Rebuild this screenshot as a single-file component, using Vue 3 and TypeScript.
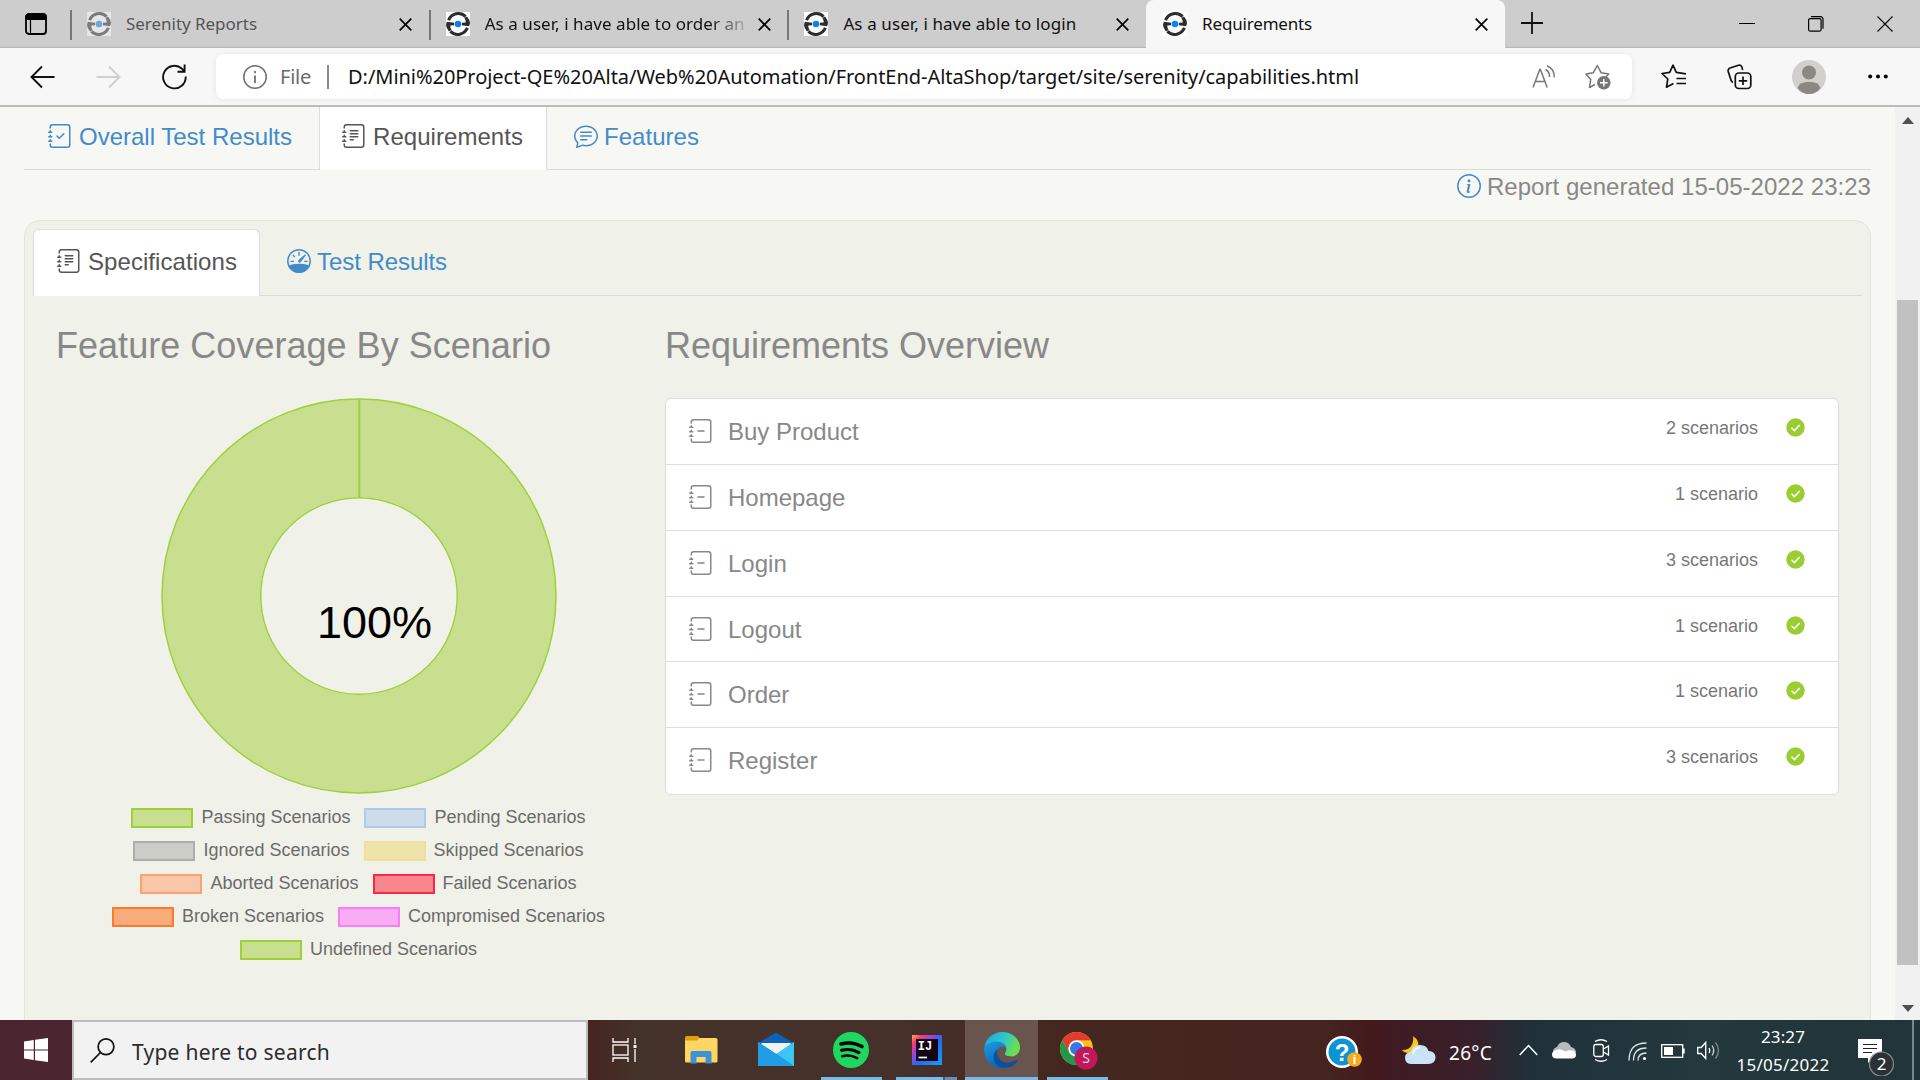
<script setup lang="ts">
import type { Directive } from 'vue'

interface BrowserTab {
  title: string
  width: number
  active?: boolean
  faded?: boolean
  clipped?: boolean
}
interface LegendItem {
  label: string
  stroke: string
  fill: string
}
interface Requirement {
  name: string
  count: string
}

// Spreads a label's letters so that it takes up the given width.
const vFit: Directive<HTMLElement, number> = {
  mounted(el, { value }) {
    const natural = el.getBoundingClientRect().width
    const letters = (el.textContent ?? '').length
    el.style.letterSpacing = `${(value - natural) / letters}px`
  },
}

const tabs: BrowserTab[] = [
  { title: 'Serenity Reports', width: 131, faded: true },
  { title: 'As a user, i have able to order an', width: 260, clipped: true },
  { title: 'As a user, i have able to login', width: 233 },
  { title: 'Requirements', width: 110, active: true },
]

const journal = [
  'M3 0h10a2 2 0 0 1 2 2v12a2 2 0 0 1-2 2H3a2 2 0 0 1-2-2v-1h1v1a1 1 0 0 0 1 1h10a1 1 0 0 0 1-1V2a1 1 0 0 0-1-1H3a1 1 0 0 0-1 1v1H1V2a2 2 0 0 1 2-2z',
  'M1 5v-.5a.5.5 0 0 1 1 0V5h.5a.5.5 0 0 1 0 1h-2a.5.5 0 0 1 0-1H1zm0 3v-.5a.5.5 0 0 1 1 0V8h.5a.5.5 0 0 1 0 1h-2a.5.5 0 0 1 0-1H1zm0 3v-.5a.5.5 0 0 1 1 0v.5h.5a.5.5 0 0 1 0 1h-2a.5.5 0 0 1 0-1H1z',
]
const icons = {
  journalCheck: [
    ...journal,
    'M10.854 6.146a.5.5 0 0 1 0 .708l-3 3a.5.5 0 0 1-.708 0l-1.5-1.5a.5.5 0 1 1 .708-.708L7.5 8.793l2.646-2.647a.5.5 0 0 1 .708 0z',
  ],
  journalText: [
    ...journal,
    'M5 10.5a.5.5 0 0 1 .5-.5h2a.5.5 0 0 1 0 1h-2a.5.5 0 0 1-.5-.5zm0-2a.5.5 0 0 1 .5-.5h5a.5.5 0 0 1 0 1h-5a.5.5 0 0 1-.5-.5zm0-2a.5.5 0 0 1 .5-.5h5a.5.5 0 0 1 0 1h-5a.5.5 0 0 1-.5-.5zm0-2a.5.5 0 0 1 .5-.5h5a.5.5 0 0 1 0 1h-5a.5.5 0 0 1-.5-.5z',
  ],
  journalMinus: [...journal, 'M5.5 8a.5.5 0 0 1 .5-.5h4a.5.5 0 0 1 0 1H6a.5.5 0 0 1-.5-.5z'],
  chatText: [
    'M2.678 11.894a1 1 0 0 1 .287.801 10.97 10.97 0 0 1-.398 2c1.395-.323 2.247-.697 2.634-.893a1 1 0 0 1 .71-.074A8.06 8.06 0 0 0 8 14c3.996 0 7-2.807 7-6 0-3.192-3.004-6-7-6S1 4.808 1 8c0 1.468.617 2.83 1.678 3.894zm-.493 3.905a21.682 21.682 0 0 1-.713.129c-.2.032-.352-.176-.273-.362a9.68 9.68 0 0 0 .244-.637l.003-.01c.248-.72.45-1.548.524-2.319C.743 11.37 0 9.76 0 8c0-3.866 3.582-7 8-7s8 3.134 8 7-3.582 7-8 7a9.06 9.06 0 0 1-2.347-.306c-.52.263-1.639.742-3.468 1.105z',
    'M4 5.5a.5.5 0 0 1 .5-.5h7a.5.5 0 0 1 0 1h-7a.5.5 0 0 1-.5-.5zM4 8a.5.5 0 0 1 .5-.5h7a.5.5 0 0 1 0 1h-7A.5.5 0 0 1 4 8zm0 2.5a.5.5 0 0 1 .5-.5h4a.5.5 0 0 1 0 1h-4a.5.5 0 0 1-.5-.5z',
  ],
  infoCircle: [
    'M8 15A7 7 0 1 1 8 1a7 7 0 0 1 0 14zm0 1A8 8 0 1 0 8 0a8 8 0 0 0 0 16z',
    'm8.93 6.588-2.29.287-.082.38.45.083c.294.07.352.176.288.469l-.738 3.468c-.194.897.105 1.319.808 1.319.545 0 1.178-.252 1.465-.598l.088-.416c-.2.176-.492.246-.686.246-.275 0-.375-.193-.304-.533L8.93 6.588zM9 4.5a1 1 0 1 1-2 0 1 1 0 0 1 2 0z',
  ],
}

const legend: LegendItem[][] = [
  [
    { label: 'Passing Scenarios', stroke: '#9fd03c', fill: '#c7df8f' },
    { label: 'Pending Scenarios', stroke: '#aecbec', fill: '#ccdcea' },
  ],
  [
    { label: 'Ignored Scenarios', stroke: '#adaeac', fill: '#cccdc8' },
    { label: 'Skipped Scenarios', stroke: '#eee09a', fill: '#efe3ac' },
  ],
  [
    { label: 'Aborted Scenarios', stroke: '#fba26e', fill: '#f8c6a9' },
    { label: 'Failed Scenarios', stroke: '#fc2742', fill: '#f8868e' },
  ],
  [
    { label: 'Broken Scenarios', stroke: '#fd7a2b', fill: '#f8ac7c' },
    { label: 'Compromised Scenarios', stroke: '#fb7bfb', fill: '#f7acf4' },
  ],
  [{ label: 'Undefined Scenarios', stroke: '#9fd03c', fill: '#c7df8f' }],
]

const requirements: Requirement[] = [
  { name: 'Buy Product', count: '2 scenarios' },
  { name: 'Homepage', count: '1 scenario' },
  { name: 'Login', count: '3 scenarios' },
  { name: 'Logout', count: '1 scenario' },
  { name: 'Order', count: '1 scenario' },
  { name: 'Register', count: '3 scenarios' },
]
</script>

<template>
  <div class="screen">
    <header class="tabstrip">
      <div class="workspace">
        <svg width="22" height="22" viewBox="0 0 22 22"><rect x="1" y="1" width="20" height="20" rx="3" fill="none" stroke="#000" stroke-width="1.8" /><path d="M1 3.500Q1 1 4 1h14q3 0 3 2.500v3H1zM5.500 7v14" fill="#000" stroke="#000" stroke-width="1.200" /></svg>
      </div>
      <div v-for="tab in tabs" :key="tab.title" class="tab" :class="{ active: tab.active, faded: tab.faded }">
        <svg class="favicon" width="24" height="24" viewBox="0 0 24 24">
          <rect width="24" height="24" fill="#fff" />
          <path d="M2.600 8.200A10.400 10.400 0 0 1 19.600 4.600M21.400 15.800A10.400 10.400 0 0 1 4.400 19.400" fill="none" stroke="#2c2c2c" stroke-width="3" />
          <path d="M0 13 .8 9.800 8.200 10.800 8 13.300 4.300 13.500Q4.200 16.500 5.600 18L3 19.500Q.3 16.500 0 13zM24 11 23.200 14.200 15.800 13.200 16 10.700 19.700 10.500Q19.800 7.500 18.400 6L21 4.500Q23.700 7.500 24 11z" fill="#2c2c2c" />
          <circle cx="12" cy="12" r="3.300" fill="#0b84ea" />
        </svg>
        <span class="title" :class="{ clipped: tab.clipped }"><span v-fit="tab.width">{{ tab.title }}</span></span>
        <svg class="close" width="13" height="13" viewBox="0 0 13 13"><path d="m.7.7 11.600 11.600M12.300.7.7 12.300" stroke="#000" stroke-width="1.700" /></svg>
      </div>
      <svg class="newtab" width="22" height="22" viewBox="0 0 22 22"><path d="M11 0v22M0 11h22" stroke="#111" stroke-width="1.800" /></svg>
      <div class="winbtns">
        <svg width="16" height="16" viewBox="0 0 16 16"><path d="M0 7.500h16" stroke="#000" /></svg>
        <svg width="16" height="16" viewBox="0 0 16 16" fill="none" stroke="#000" stroke-width="1.200"><rect x=".6" y="2.600" width="12.500" height="12.500" rx="1.500" /><path d="M3 .7h9.500a2.500 2.500 0 0 1 2.500 2.500v9.500" /></svg>
        <svg width="16" height="16" viewBox="0 0 16 16"><path d="m.5.5 15 15m0-15-15 15" stroke="#000" stroke-width="1.100" /></svg>
      </div>
    </header>

    <div class="toolbar">
      <div class="nav">
        <svg width="25" height="24" viewBox="0 0 25 24" fill="none" stroke="#111" stroke-width="1.900"><path d="M24.500 12H1.500M12 1.500 1.500 12 12 22.500" /></svg>
        <svg width="25" height="24" viewBox="0 0 25 24" fill="none" stroke="#cfcfcf" stroke-width="1.900"><path d="M.5 12h23M13 1.500 23.500 12 13 22.500" /></svg>
        <svg width="25" height="26" viewBox="0 0 25 26" fill="none" stroke="#111" stroke-width="1.900"><path d="M23.700 12.500A11.300 11.300 0 1 1 20 4.700L22.500 7.500M22.600.5v7.300H15.500" /></svg>
      </div>
      <div class="address">
        <svg width="24" height="24" viewBox="0 0 24 24"><circle cx="12" cy="12" r="11.200" fill="none" stroke="#707070" stroke-width="1.500" /><path d="M12 10.500v7.500M12 6v2.200" stroke="#707070" stroke-width="1.800" /></svg>
        <span class="scheme"><span v-fit="31">File</span></span>
        <i class="sep"></i>
        <span class="url"><span v-fit="1011">D:/Mini%20Project-QE%20Alta/Web%20Automation/FrontEnd-AltaShop/target/site/serenity/capabilities.html</span></span>
        <svg class="read" width="24" height="24" viewBox="0 0 24 24" fill="none" stroke="#767676" stroke-width="1.500"><path d="M1 22.500 7.800 4.500h.6l6.800 18M3.500 16.500h9.200M13.500 4.500q4.500 2.500 4 7.500M15 .8q7.500 3.200 7.200 11.500" /></svg>
        <svg class="star" width="26" height="26" viewBox="0 0 26 26"><path d="m10 20.500-5.500 3 1.200-8L1 10l7.200-1.200L12.300 1.500l3.900 7.300 7.500 1.200-2.800 3" fill="none" stroke="#767676" stroke-width="1.500" stroke-linejoin="round" /><circle cx="18.800" cy="18.800" r="6.800" fill="#767676" /><path d="M18.800 15v7.600M15 18.800h7.600" stroke="#fff" stroke-width="1.500" /></svg>
      </div>
      <div class="actions">
        <svg width="25" height="25" viewBox="0 0 25 25" fill="none" stroke="#111" stroke-width="1.700" stroke-linejoin="round"><path d="m12.500 19.500-7 3.700 1.300-8.200L1 9.500l7.700-1.200L12 1.200l3.300 7.100L25 9.800M15.500 14.500H25M15.500 19.500H25" /></svg>
        <svg width="25" height="26" viewBox="0 0 25 26" fill="none" stroke="#111" stroke-width="1.700"><rect x="8.300" y="9" width="15.500" height="15.500" rx="3.500" /><path d="M16 12.500v8.500M11.800 16.800h8.400M6 18.500Q4.500 18 4 16L1.200 7.500Q.7 5 3 4l8.500-2.800q2.500-.7 3.400 1.800l.8 3" /></svg>
        <svg class="avatar" width="34" height="34" viewBox="0 0 34 34"><circle cx="17" cy="17" r="17" fill="#d2d0cd" /><circle cx="17" cy="12.500" r="7" fill="#8b8782" /><path d="M5.500 28q2-6.300 11.500-6.300T28.500 28Q24 34 17 34T5.500 28z" fill="#8b8782" /></svg>
        <svg width="20" height="5" viewBox="0 0 20 5"><circle cx="2.200" cy="2.500" r="2" /><circle cx="10" cy="2.500" r="2" /><circle cx="17.800" cy="2.500" r="2" /></svg>
      </div>
    </div>

    <main class="viewport">
      <div class="page">
        <nav class="maintabs">
          <a class="item">
            <svg class="bi" viewBox="0 0 16 16"><path v-for="d in icons.journalCheck" :key="d" :d="d" /></svg>
            <span v-fit="213">Overall Test Results</span>
          </a>
          <a class="item on">
            <svg class="bi" viewBox="0 0 16 16"><path v-for="d in icons.journalText" :key="d" :d="d" /></svg>
            <span v-fit="150">Requirements</span>
          </a>
          <a class="item last">
            <svg class="bi" viewBox="0 0 16 16"><path v-for="d in icons.chatText" :key="d" :d="d" /></svg>
            <span v-fit="95">Features</span>
          </a>
        </nav>
        <p class="generated">
          <svg class="bi blue" viewBox="0 0 16 16"><path v-for="d in icons.infoCircle" :key="d" :d="d" /></svg>
          <span v-fit="384">Report generated 15-05-2022 23:23</span>
        </p>

        <section class="panel">
          <nav class="subtabs">
            <a class="sub on">
              <svg class="bi" viewBox="0 0 16 16"><path v-for="d in icons.journalText" :key="d" :d="d" /></svg>
              <span v-fit="149">Specifications</span>
            </a>
            <a class="sub">
              <svg class="bi" viewBox="0 0 16 16">
                <circle cx="8" cy="8" r="7.500" fill="none" stroke="currentColor" />
                <path d="M1 11.600Q2 10 8 9.900t7 1.700Q13 15.600 8 15.800 3 15.600 1 11.600z" />
                <path d="M8 2v2.500M4 4l1.200 1.400M2.300 8.200h2.300M11.500 8.200h2.300" fill="none" stroke="currentColor" stroke-width=".9" />
                <path d="M11.900 3.600a.5.500 0 0 1 .6.700L9.200 8.700q-.8.800-1.500.2t0-1.500z" />
              </svg>
              <span v-fit="130">Test Results</span>
            </a>
          </nav>
          <div class="columns">
            <div class="coverage">
              <h2><span v-fit="495">Feature Coverage By Scenario</span></h2>
              <svg class="donut" width="398" height="398" viewBox="-199 -199 398 398">
                <circle r="148" fill="none" stroke="#c7df8f" stroke-width="98" />
                <g fill="none" stroke="#9fd03c" stroke-width="1.500"><circle r="197" /><circle r="98.300" /><path d="M.3-197V-98.500" stroke-width="2" /></g>
                <text x="-42" y="42" font-size="45">100%</text>
              </svg>
              <div class="legend">
                <div v-for="(row, r) in legend" :key="r" class="lrow">
                  <span v-for="item in row" :key="item.label" class="litem">
                    <i :style="{ borderColor: item.stroke, background: item.fill }"></i>{{ item.label }}
                  </span>
                </div>
              </div>
            </div>
            <div class="overview">
              <h2><span v-fit="384">Requirements Overview</span></h2>
              <ul>
                <li v-for="req in requirements" :key="req.name">
                  <svg class="bi" viewBox="0 0 16 16"><path v-for="d in icons.journalMinus" :key="d" :d="d" /></svg>
                  <span class="name">{{ req.name }}</span>
                  <span class="count">{{ req.count }}</span>
                  <svg class="ok" width="19" height="19" viewBox="0 0 19 19"><circle cx="9.500" cy="9.500" r="9.200" fill="#9acd32" /><path d="m5.500 9.700 2.900 2.900 5.300-5.600" fill="none" stroke="#fff" stroke-width="1.500" /></svg>
                </li>
              </ul>
            </div>
          </div>
        </section>
      </div>
      <div class="scrollbar">
        <svg width="12" height="7" viewBox="0 0 12 7"><path d="M0 7 6 0l6 7z" fill="#505050" /></svg>
        <div class="thumb"></div>
        <svg class="down" width="12" height="7" viewBox="0 0 12 7"><path d="m0 0 6 7 6-7z" fill="#505050" /></svg>
      </div>
    </main>

    <footer class="taskbar">
      <div class="start">
        <svg width="24" height="24" viewBox="0 0 24 24" fill="#fff"><path d="M0 3.400 9.800 2v9.400H0zM11 1.800 24 0v11.400H11zM0 12.600h9.800V22L0 20.600zM11 12.600h13V24l-13-1.800z" /></svg>
      </div>
      <div class="search">
        <svg width="25" height="25" viewBox="0 0 25 25" fill="none" stroke="#111" stroke-width="1.700"><circle cx="16" cy="8.800" r="7.900" /><path d="M10.500 14.500.7 24.300" /></svg>
        <span class="hint"><span v-fit="198">Type here to search</span></span>
      </div>
      <div class="apps">
        <div class="app view">
          <svg width="25" height="24" viewBox="0 0 25 24" fill="none" stroke="#fff" stroke-width="1.300"><path d="M1 0v4h15V0M1 24v-4h15v4M23 0v6M23 11v13" /><rect x="1" y="7" width="15" height="10" /><path d="M21.500 8.500h3" stroke-width="3" /></svg>
        </div>
        <div class="app">
          <svg width="34" height="28" viewBox="0 0 34 28"><path d="M1 1.500Q1 0 2.500 0H14l2.500 3-3 3H1z" fill="#e09f0b" /><path d="M1 4.500h12L15.500 2H32q1.500 0 1.500 1.500V25q0 1.500-1.500 1.500H2.500Q1 26.500 1 25z" fill="#ffd563" /><path d="M6.500 27.500V17q0-2 2-2h17q2 0 2 2v10.500h-6V21h-9v6.500z" fill="#3d93d8" /></svg>
        </div>
        <div class="app">
          <svg width="36" height="34" viewBox="0 0 36 34"><path d="M0 11 18 .5 36 11v3H0z" fill="#0b62b8" /><path d="M3.500 11h29v4L18 24 3.500 15z" fill="#f2f2f2" /><path d="m0 10 18 12.500L36 10v24H0z" fill="#2aa9ec" /><path d="m18 22 18-12v24z" fill="#3cc6f4" /><path d="m18 21.500 18 12.500H0V10z" fill="#219de6" /><path d="M3.500 11h29L18 21.500z" fill="#f2f2f2" /></svg>
        </div>
        <div class="app run">
          <svg width="36" height="36" viewBox="0 0 36 36"><circle cx="18" cy="18" r="18" fill="#1ed760" /><g fill="none" stroke="#000" stroke-linecap="round"><path d="M8 12q11-3 21 2.500" stroke-width="3.600" /><path d="M8.500 18.300q9.500-2.500 17.500 2.300" stroke-width="3" /><path d="M9.200 24.200q8-1.900 15 2" stroke-width="2.500" /></g></svg>
        </div>
        <div class="app run stacked">
          <svg width="30" height="30" viewBox="0 0 30 30">
            <defs>
              <linearGradient id="ij" x1="0" y1="0" x2="1" y2="1"><stop offset="0" stop-color="#ffb04a" /><stop offset=".16" stop-color="#fc3a70" /><stop offset=".36" stop-color="#9a43dc" /><stop offset=".55" stop-color="#2668f2" /><stop offset="1" stop-color="#0da2f8" /></linearGradient>
            </defs>
            <rect width="30" height="30" fill="url(#ij)" /><rect x="4" y="4" width="22" height="22" fill="#120616" /><text x="5.800" y="15.300" class="mono" font-size="12" fill="#fff">IJ</text><path d="M6.500 22.500h8.500" stroke="#fff" stroke-width="1.700" />
          </svg>
        </div>
        <div class="app run current">
          <svg width="36" height="36" viewBox="0 0 36 36">
            <defs>
              <linearGradient id="eg1" x1="0" y1="0" x2="1" y2=".4"><stop offset="0" stop-color="#1aa5e2" /><stop offset=".55" stop-color="#2cc6cd" /><stop offset="1" stop-color="#6be04e" /></linearGradient>
              <linearGradient id="eg2" x1="0" y1="0" x2=".5" y2="1"><stop offset="0" stop-color="#1b9de0" /><stop offset="1" stop-color="#0a62c0" /></linearGradient>
            </defs>
            <path d="M.5 15A18 17.500 0 0 1 18 0c10 0 18 7 18 15.500 0 6-4.500 9-9 9-4 0-6.500-1.500-6.500-3 0-1 1.800-1.800 1.800-4.500 0-4-4.500-7-10-7C7 10 3 12 .5 15z" fill="url(#eg1)" />
            <path d="M.2 16C3 11 7.500 9.500 12 9.500c6 0 10 3.500 10.300 7-2-3-9.300-2.500-9.500 5C12.600 29 19 34.500 24 34.500c-3 1.500-6 1.500-7 1.500C7 36-.8 27 .2 16z" fill="url(#eg2)" />
            <path d="M14 17.500c-3 9 5 13.500 10.500 13 4.500-.4 6.500-2.500 8.500-2.500q1 .5 0 2C29 35 24 36.500 18 35.500c-5-1-8.500-5.500-8.500-10.500 0-3.500 2-6.500 4.500-7.500z" fill="#0e4f9e" />
            <path d="M14 17.500q3.500-4 7-2.500 1.600 1.500 1.200 3.500-.5 1.700-1.600 3 .4 3 6.400 3-2 2-6 2-6 0-7.500-3.500-.6-3 .5-5.500z" fill="#6a544e" />
          </svg>
        </div>
        <div class="app run">
          <svg class="chrome" width="38" height="38" viewBox="0 0 38 38">
            <circle cx="16.500" cy="16.500" r="16.500" fill="#fbc116" />
            <path d="M2.200 8.300A16.500 16.500 0 0 1 30.800 8.300H16.500L9 20z" fill="#e33b2e" />
            <path d="M2.200 8.300a16.500 16.500 0 0 0 14.300 24.700L23.600 20.600 9.400 20.600z" fill="#22964a" />
            <circle cx="16.500" cy="16.500" r="8.200" fill="#fff" /><circle cx="16.500" cy="16.500" r="6.500" fill="#3577e5" />
            <circle cx="26" cy="26" r="11.500" fill="#c2185b" /><text x="26" y="31" text-anchor="middle" class="round" font-size="14" fill="#f6cfe0">S</text>
          </svg>
        </div>
      </div>
      <div class="tray">
        <svg class="help" width="36" height="33" viewBox="0 0 36 33"><circle cx="16" cy="16" r="16" fill="#fff" /><circle cx="16" cy="16" r="13.500" fill="#0a93d5" /><text x="16" y="24.500" text-anchor="middle" class="liberation b" font-size="24" fill="#fff">?</text><circle cx="28.500" cy="23.500" r="7.300" fill="#f5ab1c" /><text x="28.500" y="28" text-anchor="middle" class="liberation b" font-size="13" fill="#fff">i</text></svg>
        <svg class="weather" width="34" height="30" viewBox="0 0 34 30"><path d="M11 1q7 5 5 11-2 6-9 6-5 0-7-3 7 0 9.500-4.500T11 1z" fill="#f8c618" /><path d="M9 29q-6-.5-6-6t6-6q1-7 9-7 7 0 8.500 6 7 .5 7 6.500T26 29z" fill="#c9e4f9" /><path d="M11 19q1-6 7-6.500" fill="none" stroke="#eef8ff" stroke-width="2" /></svg>
        <span class="temp"><span v-fit="43">26°C</span></span>
        <svg class="chev" width="19" height="12" viewBox="0 0 19 12"><path d="m.7 11 8.800-9.500 8.800 9.500" fill="none" stroke="#fff" stroke-width="1.500" /></svg>
        <svg class="cloud" width="24" height="18" viewBox="0 0 24 18"><path d="M1 10.500Q1 7 5 6q2-5 7-5t7 5q5 1 5 5.500L12 15z" fill="#b6babb" /><path d="M4.500 17.500q-4.500 0-4.500-4t5-4.500q2-1.500 5 0l4 1.500q2-1.500 5-1.300 5 .3 5 4.500 0 3.800-4 3.800z" fill="#fff" /></svg>
        <svg class="cam" width="17" height="23" viewBox="0 0 17 23" fill="none" stroke="#fff" stroke-width="1.300"><rect x=".8" y="5.500" width="9.500" height="12" rx="2" /><path d="M10.500 10 15.500 7v9l-5-3M2 2.500q6-3.500 12 0M2 20.500q6 3.500 12 0" /></svg>
        <svg class="wifi" width="19" height="19" viewBox="0 0 19 19" fill="none" stroke="#dfe5e6" stroke-width="1.300"><path d="M1 18.500Q1 1 18.500 1M5.500 18.500Q5.500 6 18.500 6M10 18.500Q10 11 18.500 11" /><circle cx="16.500" cy="16.500" r="1.600" fill="#fff" stroke="none" /></svg>
        <svg class="batt" width="24" height="14" viewBox="0 0 24 14"><rect x=".7" y=".7" width="21" height="12.600" fill="none" stroke="#fff" stroke-width="1.300" /><path d="M3 3h9v8H3zM22 4.500h1.700v5H22z" fill="#fff" /></svg>
        <svg class="vol" width="23" height="19" viewBox="0 0 23 19" fill="none" stroke="#fff" stroke-width="1.300"><path d="M.7 6.500v6h3.500l4.500 5V1.500l-4.500 5zM12 7q1.500 2.500 0 5" /><path d="M15 4.500q3.500 5 0 10" stroke="#ccd2d3" /><path d="M18.500 1.500q6 8 0 16" stroke="#7d8a8c" /></svg>
        <div class="clock"><span><span v-fit="44">23:27</span></span><span><span v-fit="93">15/05/2022</span></span></div>
        <svg class="notes" width="37" height="37" viewBox="0 0 37 37"><path d="M0 0h24v19H15l-5 5v-5H0z" fill="#fff" /><path d="M5 5.500h14M5 9.500h14M5 13.500h9" stroke="#222" stroke-width="1.200" /><circle cx="23.500" cy="25" r="12" fill="#2b3134" stroke="#858b8d" stroke-width="1.200" /><text x="23.500" y="31" text-anchor="middle" class="round" font-size="17" fill="#fff">2</text></svg>
        <i class="peek"></i>
      </div>
    </footer>
  </div>
</template>

<style>
body {
  overflow: hidden;
}
</style>

<style scoped>
.screen {
  width: 1920px;
  height: 1080px;
  display: flex;
  flex-direction: column;
  overflow: hidden;
  font-family: 'Liberation Sans', Arial, sans-serif;
  color: #888;
}
.screen * {
  box-sizing: border-box;
}
svg {
  display: block;
  flex: none;
}
.tabstrip {
  height: 48px;
  flex: none;
  display: flex;
  align-items: center;
  background: #cdcdcd;
  box-shadow: inset 0 -2px 1px -1px #b5b5b5;
  font: 17px 'Noto Sans', 'Open Sans', sans-serif;
  color: #111;
}
.workspace {
  width: 70px;
  padding-left: 25px;
}
.tab {
  width: 358.7px;
  height: 48px;
  display: flex;
  align-items: center;
  padding-left: 17px;
  flex: none;
  background: linear-gradient(#777, #777) 0 10px / 2px 30px no-repeat;
}
.tab.active {
  background: #f7f7f7;
  border-radius: 8px 8px 0 0;
}
.tab.faded .favicon {
  opacity: 0.5;
}
.tab.faded .title {
  color: #555;
}
.title {
  width: 273px;
  margin: -2px 0 0 15px;
  white-space: nowrap;
}
.title.clipped {
  -webkit-mask: linear-gradient(90deg, #000 225px, transparent 268px);
  mask: linear-gradient(90deg, #000 225px, transparent 268px);
}
.newtab {
  margin: -2px 0 0 16px;
}
.winbtns {
  display: flex;
  gap: 53px;
  margin-left: auto;
  margin-right: 27px;
}
.toolbar {
  height: 59px;
  flex: none;
  display: flex;
  background: #f7f7f7;
  border-bottom: 2px solid #bbb;
  padding-top: 6px;
}
.nav {
  width: 216px;
  height: 45px;
  padding-left: 30px;
  display: flex;
  align-items: center;
  gap: 41px;
}
.address {
  width: 1416px;
  height: 45px;
  border-radius: 7px;
  background: #fff;
  box-shadow: 0 0 6px rgba(0, 0, 0, 0.08);
  display: flex;
  align-items: center;
  padding-left: 27px;
  font: 20px 'Noto Sans', 'Open Sans', sans-serif;
  color: #111;
}
.scheme {
  width: 47px;
  margin-left: 13px;
  color: #6b6b6b;
}
.sep {
  width: 2px;
  height: 24px;
  background: #8a8a8a;
}
.url {
  margin-left: 19px;
  width: 1184px;
  white-space: nowrap;
}
.star {
  margin: 0 0 0 29px;
}
.actions {
  flex: 1;
  height: 45px;
  display: flex;
  align-items: center;
  padding-left: 29px;
}
.actions svg + svg {
  margin-left: 41px;
}
.actions svg.avatar {
  margin-left: 40px;
}
.actions svg:last-child {
  margin-left: 42px;
}
.viewport {
  height: 913px;
  flex: none;
  display: flex;
  overflow: hidden;
  background: #f7f8f3;
}
.page {
  width: 1895px;
  height: 913px;
  overflow: hidden;
  padding: 0 24px;
  font-size: 24px;
}
.bi {
  width: 24px;
  height: 24px;
  fill: currentColor;
}
.maintabs {
  height: 63px;
  display: flex;
  border-bottom: 1px solid #dadcd8;
  line-height: 28px;
}
.item,
.sub {
  display: flex;
  color: #428bca;
  white-space: nowrap;
}
.item {
  height: 63px;
  width: 295px;
  padding: 17px 0 0 24px;
  gap: 7px;
}
.item.on {
  width: 228px;
  padding-left: 22px;
  background: #fff;
  border: solid #ddd;
  border-width: 0 1px;
}
.item span {
  margin-top: -1px;
}
.item.on,
.sub.on {
  color: #555;
}
.item.last {
  padding-left: 27px;
  gap: 6px;
}
.generated {
  margin: 4px 0 0;
  height: 46px;
  display: flex;
  justify-content: flex-end;
  gap: 6px;
  line-height: 28px;
}
.generated span {
  white-space: nowrap;
  margin-top: -1px;
}
.blue {
  color: #428bca;
}
.panel {
  width: 1847px;
  height: 815px;
  background: #f0f1e8;
  border: 1px solid #e3e5dd;
  border-radius: 16px;
  padding: 8px;
}
.subtabs {
  display: flex;
  height: 67px;
  border-bottom: 1px solid #d9dbd7;
  line-height: 28px;
}
.sub {
  height: 67px;
  padding: 20px 0 0 27px;
  gap: 6px;
}
.sub.on {
  width: 227px;
  padding: 19px 0 0 23px;
  gap: 7px;
  background: #fff;
  border: 1px solid #ddd;
  border-bottom: 0;
  border-radius: 6px 6px 0 0;
}
.sub span {
  margin-top: -1px;
}
.columns {
  display: flex;
  padding: 0 23px 0 20px;
}
.coverage {
  width: 612px;
}
h2 {
  margin: 28px 0 0;
  height: 74px;
  font-weight: 400;
  font-size: 36px;
  line-height: 44px;
  white-space: nowrap;
}
.coverage h2 {
  padding-left: 3px;
  height: 73px;
}
.donut {
  margin-left: 107px;
}
.donut text,
.liberation {
  font-family: 'Liberation Sans', Arial, sans-serif;
}
.legend {
  width: 611px;
  margin-top: 6px;
  font-size: 18px;
  color: #6b6b6b;
}
.lrow {
  display: flex;
  justify-content: center;
  gap: 14px;
  height: 33px;
  line-height: 33px;
}
.litem {
  display: flex;
  align-items: center;
  white-space: nowrap;
}
.litem i {
  width: 62px;
  height: 20px;
  margin: 1px 8px 0 0;
  border: 2px solid;
}
.overview {
  flex: 1;
}
ul {
  list-style: none;
  margin: 0;
  padding: 0;
  height: 397px;
  border: 1px solid #ddd;
  border-radius: 6px;
  background: #fff;
  overflow: hidden;
}
li {
  height: 65.4px;
  display: flex;
  padding: 20px 33px 0 23px;
}
li + li {
  height: 65.7px;
  border-top: 1px solid #ddd;
}
.name {
  margin: -1px 0 0 15px;
  line-height: 28px;
}
.count {
  margin: -1px 0 0 auto;
  width: 120px;
  text-align: right;
  font-size: 18px;
  line-height: 20px;
  color: #777;
}
.ok {
  margin: -1px 0 0 28px;
}
.scrollbar {
  width: 25px;
  height: 913px;
  background: #f1f1f1;
  display: flex;
  flex-direction: column;
  align-items: center;
  padding-top: 10px;
}
.thumb {
  width: 21px;
  height: 665px;
  margin-top: 176px;
  background: #c1c1c1;
}
.down {
  margin-top: 40px;
}
.taskbar {
  height: 60px;
  flex: none;
  display: flex;
  background: linear-gradient(90deg, #4b2530 0, #4b2530 72px, #45251f 588px, #44332a 640px, #45302a 900px, #44281f 1060px, #44241f 1330px, #43191c 1370px, #3e1b24 1400px, #38202a 1475px, #20303a 1530px, #23393d 1700px, #203439 1920px);
  color: #fff;
}
.start {
  width: 72px;
  padding: 18px 0 0 24px;
}
.search {
  width: 516px;
  display: flex;
  align-items: center;
  gap: 17px;
  padding-left: 16px;
  background: #f2f2f2;
  border: 2px solid #bdbdbd;
  color: #2b2b2b;
  font: 21px 'Noto Sans', 'Open Sans', sans-serif;
}
.hint {
  margin-top: 3px;
}
.apps {
  display: flex;
  padding-left: 1px;
}
.app {
  width: 73px;
  margin-right: 2.3px;
  height: 60px;
  position: relative;
  display: flex;
  justify-content: center;
  padding-top: 12px;
}
.app.view {
  padding-top: 18px;
  width: 71px;
  margin-right: 4.3px;
}
.app:nth-child(2) {
  padding-top: 16px;
}
.app.stacked {
  padding-top: 15px;
}
.app.run::after {
  content: '';
  position: absolute;
  left: 6px;
  bottom: 0;
  width: 61px;
  height: 3px;
  background: #76b9ed;
}
.app.stacked::after {
  background: linear-gradient(90deg, #76b9ed 47px, #3d6081 47px 49px, #638fb9 49px);
}
.app.current {
  background: #6a544e;
}
.app.current::after {
  left: 0;
  width: 73px;
}
.chrome {
  margin-left: 3px;
}
.mono {
  font-family: 'Liberation Mono', monospace;
  font-weight: 700;
}
.round {
  font-family: 'Noto Sans', sans-serif;
}
.b {
  font-weight: 700;
}
.tray {
  margin-left: auto;
  width: 595px;
  display: flex;
  align-items: center;
  font: 19px 'Noto Sans', 'Open Sans', sans-serif;
}
.help {
  margin: 4px 0 0 1px;
}
.weather {
  margin-left: 40px;
}
.temp {
  width: 46px;
  margin: 5px 0 0 13px;
  white-space: nowrap;
}
.chev {
  margin-left: 24px;
}
.cloud {
  margin-left: 14px;
}
.cam {
  margin-left: 17px;
}
.wifi {
  margin: 3px 0 0 18px;
}
.batt {
  margin: 1px 0 0 14px;
}
.vol {
  margin-left: 12px;
}
.clock {
  width: 94px;
  margin: 1px 1px 0 16px;
  display: flex;
  flex-direction: column;
  align-items: center;
  font-size: 17px;
  line-height: 28px;
}
.notes {
  margin: 14px 0 0 27px;
}
.peek {
  width: 2px;
  height: 60px;
  margin-left: auto;
  margin-right: 6px;
  background: #7b868a;
}
</style>
